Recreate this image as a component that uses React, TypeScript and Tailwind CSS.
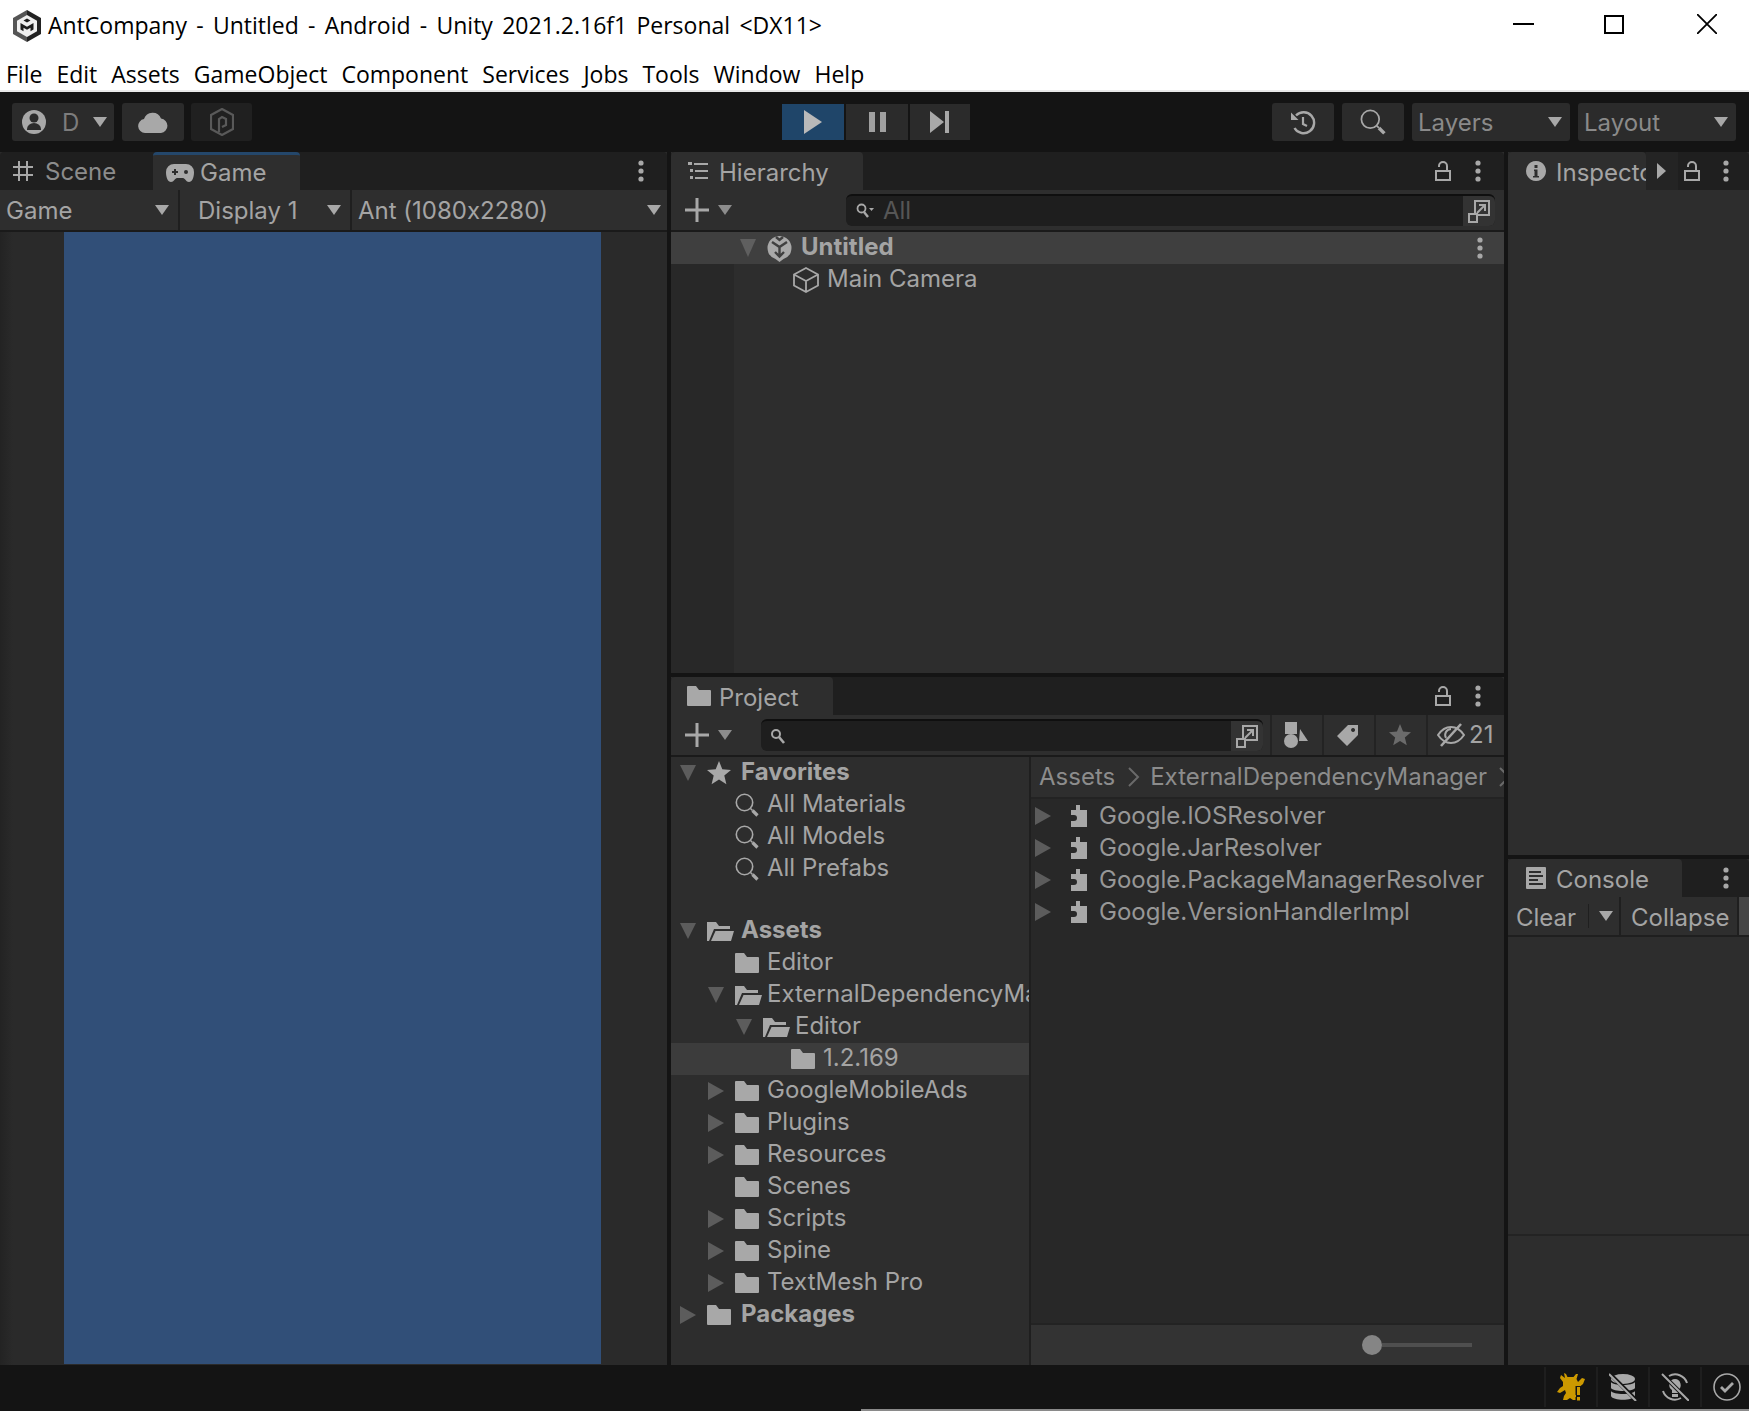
import type { ReactNode } from 'react';

const DIM = '#5c5c5c';
const ICON = '#a8a8a8';

function Down({ color = ICON, w = 14, h = 10 }: { color?: string; w?: number; h?: number }) {
  return (
    <svg width={w} height={h} viewBox="0 0 14 10" preserveAspectRatio="none" className="shrink-0">
      <path d="M0 0h14L7 10z" fill={color} />
    </svg>
  );
}

function Right({ color = DIM, w = 16, h = 18 }: { color?: string; w?: number; h?: number }) {
  return (
    <svg width={w} height={h} viewBox="0 0 16 18" preserveAspectRatio="none" className="shrink-0">
      <path d="M0 0l16 9-16 9z" fill={color} />
    </svg>
  );
}

function Dots() {
  return (
    <svg width="6" height="22" viewBox="0 0 6 22" className="shrink-0">
      <circle cx="3" cy="3" r="2.600" fill={ICON} />
      <circle cx="3" cy="11" r="2.600" fill={ICON} />
      <circle cx="3" cy="19" r="2.600" fill={ICON} />
    </svg>
  );
}

function Lock() {
  return (
    <svg width="16" height="20" viewBox="0 0 16 20" className="shrink-0" fill="none" stroke={ICON} strokeWidth="2">
      <rect x="1" y="10" width="14" height="9" />
      <path d="M12 10V5a4 4 0 0 0-8 0v1" />
    </svg>
  );
}

function Plus() {
  return (
    <svg width="24" height="24" viewBox="0 0 24 24" className="shrink-0">
      <path d="M10.500 0h3v10.500H24v3H13.500V24h-3V13.500H0v-3h10.500z" fill={ICON} />
    </svg>
  );
}

function Expand() {
  return (
    <svg width="24" height="24" viewBox="0 0 24 24" fill="none" stroke={ICON} strokeWidth="2" className="shrink-0">
      <path d="M8 15V2h14v14H9" />
      <rect x="2" y="15" width="8" height="8" />
      <path d="M10 14l8-8M12 6h6v6" />
    </svg>
  );
}

function Folder({ w = 24, h = 20 }: { w?: number; h?: number }) {
  return (
    <svg width={w} height={h} viewBox="0 0 24 20" className="shrink-0">
      <path d="M1 0h8l3 4h11a1 1 0 0 1 1 1v14a1 1 0 0 1-1 1H1a1 1 0 0 1-1-1V1a1 1 0 0 1 1-1z" fill={ICON} />
    </svg>
  );
}

function FolderOpen() {
  return (
    <svg width="27" height="20" viewBox="0 0 27 20" className="shrink-0">
      <path d="M0 20V1h9l3 4h11v3H7L2 20z" fill={ICON} />
      <path d="M4 20L8.500 10H27l-3 10z" fill={ICON} />
    </svg>
  );
}

function Star({ color = ICON, size = 24 }: { color?: string; size?: number }) {
  return (
    <svg width={size} height={size} viewBox="0 0 24 24" className="shrink-0">
      <path d="M12 0l3.300 8.200 8.700.7-6.700 5.700 2.100 8.600L12 18.500 4.600 23.200l2.100-8.600L0 8.900l8.700-.7z" fill={color} />
    </svg>
  );
}

function Magnifier({ size = 24 }: { size?: number }) {
  return (
    <svg width={size} height={size} viewBox="0 0 24 24" fill="none" stroke={ICON} className="shrink-0">
      <circle cx="9.500" cy="9.500" r="8.200" strokeWidth="1.600" />
      <path d="M15.500 15.500l2 2" strokeWidth="1.600" />
      <path d="M17.500 17.500l5 5" strokeWidth="3.200" />
    </svg>
  );
}

function Puzzle() {
  return (
    <svg width="18" height="22" viewBox="0 0 18 22" className="shrink-0">
      <path d="M7 0h4v5h7v17H2v-6h3a3 3 0 0 0 0-6H2V5h5z" fill={ICON} />
    </svg>
  );
}

function SceneIcon() {
  return (
    <svg width="25" height="28" viewBox="0 0 25 28" className="shrink-0">
      <path d="M12.500 2a12 12 0 0 1 12 12 12 12 0 0 1-8 11l-4 3-4-3a12 12 0 0 1-8-11 12 12 0 0 1 12-12z" fill={ICON} />
      <path d="M5 8l7.500 5L20 8M12.500 13v8M8 18l4.500 4.500L17 18M9 3l3.500 3L16 3" stroke="#3f3f3f" strokeWidth="2.400" fill="none" />
    </svg>
  );
}

function TitleLogo() {
  return (
    <svg width="28" height="32" viewBox="0 0 28 32" className="shrink-0">
      <path d="M14 0l14 8v16l-14 8z" fill="#222" />
      <path d="M14 0L0 8v16l14 8z" fill="#555" />
      <path d="M14 5l10 5.700v10.600L14 27 4 21.300V10.700z" fill="#f0f0f0" />
      <path d="M7.500 13l6.500 3.700 6.500-3.700v6.500l-3 1.700v-3.400L14 19.800l-3.500-2v3.400l-3-1.700z" fill="#1d1d1d" />
      <path d="M14 8.500l3.500 2L14 12.500l-3.500-2z" fill="#1d1d1d" />
    </svg>
  );
}

function Text({ children, className = '', tone = 'text-[#a4a4a4]' }: { children: ReactNode; className?: string; tone?: string }) {
  return (
    <span className={`font-['Inter',sans-serif] [font-feature-settings:'calt'_0] text-[24px] leading-none whitespace-nowrap ${tone} ${className}`}>
      {children}
    </span>
  );
}

function ToolButton({ className = '', children }: { className?: string; children: ReactNode }) {
  return <div className={`h-[38px] flex items-center rounded-[3px] ${className}`}>{children}</div>;
}

function Menu() {
  const items = ['File', 'Edit', 'Assets', 'GameObject', 'Component', 'Services', 'Jobs', 'Tools', 'Window', 'Help'];
  return (
    <div className="h-[40px] shrink-0 flex items-start gap-[14px] pl-[6px] pt-[4px] border-b-2 border-[#e8e8e8] font-['Open_Sans',sans-serif] text-[23px] leading-[36px] text-black">
      {items.map((item) => (
        <span key={item}>{item}</span>
      ))}
    </div>
  );
}

function Toolbar() {
  return (
    <div className="h-[60px] shrink-0 flex items-center bg-[#141414] pl-[12px] pr-[13px]">
      <ToolButton className="w-[102px] pl-[10px] bg-[#2b2b2b]">
        <svg width="24" height="28" viewBox="0 0 24 28" className="shrink-0">
          <circle cx="12" cy="14" r="12" fill={ICON} />
          <circle cx="12" cy="10" r="4.500" fill="#2b2b2b" />
          <path d="M5 21a7 6 0 0 1 14 0v1H5z" fill="#2b2b2b" />
        </svg>
        <Text tone="text-[#7d7d7d]" className="ml-[16px] mt-[2px]">D</Text>
        <span className="ml-[14px]">
          <Down />
        </span>
      </ToolButton>
      <ToolButton className="w-[62px] ml-[8px] justify-center bg-[#2b2b2b]">
        <svg width="30" height="22" viewBox="0 0 30 22" className="shrink-0">
          <path d="M7 22a7 7 0 0 1-1-13.900A9 9 0 0 1 23 7.500 7.300 7.300 0 0 1 23 22z" fill={ICON} />
        </svg>
      </ToolButton>
      <ToolButton className="w-[61px] ml-[7px] justify-center bg-[#202020]">
        <svg width="24" height="28" viewBox="0 0 24 28" fill="none" stroke="#595959" strokeWidth="2.200" className="shrink-0">
          <path d="M12 1l11 6v14l-11 6-11-6V7z" />
          <path d="M9 24V11l3-2 4 2v6l-4 2" />
        </svg>
      </ToolButton>
      <div className="ml-[530px] flex h-[36px] gap-[2px]">
        <div className="w-[62px] flex items-center justify-center bg-[#1f4569]">
          <svg width="18" height="24" viewBox="0 0 18 24">
            <path d="M0 0l18 12L0 24z" fill="#b9b9b9" />
          </svg>
        </div>
        <div className="w-[62px] flex items-center justify-center gap-[5px] bg-[#2b2b2b]">
          <div className="w-[6px] h-[20px] bg-[#a0a0a0]" />
          <div className="w-[6px] h-[20px] bg-[#a0a0a0]" />
        </div>
        <div className="w-[60px] flex items-center justify-center bg-[#2b2b2b]">
          <svg width="20" height="22" viewBox="0 0 20 22">
            <path d="M0 0l14 11L0 22zM15 0h4v22h-4z" fill="#a8a8a8" />
          </svg>
        </div>
      </div>
      <ToolButton className="w-[62px] ml-auto justify-center bg-[#2b2b2b]">
        <svg width="26" height="26" viewBox="0 0 26 26" fill="none" stroke={ICON} className="shrink-0">
          <path d="M6 6.500a10.500 10.500 0 1 1-1.500 12.500" strokeWidth="2.400" />
          <path d="M1 3.500V11h7.500z" fill={ICON} stroke="none" />
          <path d="M13 8v7l4 2" strokeWidth="2.200" />
        </svg>
      </ToolButton>
      <ToolButton className="w-[62px] ml-[8px] justify-center bg-[#2b2b2b]">
        <Magnifier size={26} />
      </ToolButton>
      <ToolButton className="w-[158px] ml-[8px] pl-[6px] pr-[8px] justify-between bg-[#2b2b2b]">
        <Text tone="text-[#8a8a8a]" className="mt-[2px]">Layers</Text>
        <Down />
      </ToolButton>
      <ToolButton className="w-[158px] ml-[8px] pl-[6px] pr-[8px] justify-between bg-[#2b2b2b]">
        <Text tone="text-[#8a8a8a]" className="mt-[2px]">Layout</Text>
        <Down />
      </ToolButton>
    </div>
  );
}

function GamePanel() {
  return (
    <div className="w-[667px] shrink-0 flex flex-col bg-[#2a2a2a]">
      <div className="h-[38px] shrink-0 flex rounded-t-[4px] bg-[#1f1f1f]">
        <div className="w-[153px] flex items-center pl-[13px]">
          <svg width="20" height="20" viewBox="0 0 20 20" stroke={ICON} strokeWidth="2" className="shrink-0">
            <path d="M6 0v20M14 0v20M0 6h20M0 14h20" />
          </svg>
          <Text tone="text-[#8c8c8c]" className="ml-[12px] mt-[2px]">Scene</Text>
        </div>
        <div className="w-[147px] flex items-center pl-[13px] bg-[#2e2e2e] border-t-[3px] border-[#24476b] rounded-t-[4px]">
          <svg width="28" height="18" viewBox="0 0 28 18" className="shrink-0">
            <path d="M8 0h12a8 8 0 0 1 8 8c0 6-2 10-5 10-3 0-4-4-6-4h-6c-2 0-3 4-6 4-3 0-5-4-5-10a8 8 0 0 1 8-8z" fill={ICON} />
            <path d="M6 8h6M9 5v6" stroke="#2e2e2e" strokeWidth="2" />
            <circle cx="20" cy="8" r="2" fill="#2e2e2e" />
          </svg>
          <Text className="ml-[6px]">Game</Text>
        </div>
        <div className="ml-auto mr-[23px] self-center">
          <Dots />
        </div>
      </div>
      <div className="h-[42px] shrink-0 flex border-b-2 border-[#1a1a1a]">
        <div className="w-[180px] flex items-center justify-between pl-[6px] pr-[9px] border-r-2 border-[#1f1f1f] bg-[#2e2e2e]">
          <Text className="mt-[2px]">Game</Text>
          <Down />
        </div>
        <div className="w-[172px] flex items-center justify-between pl-[18px] pr-[9px] border-r-2 border-[#1f1f1f] bg-[#2e2e2e]">
          <Text className="mt-[2px]">Display 1</Text>
          <Down />
        </div>
        <div className="flex-1 flex items-center justify-between pl-[6px] pr-[6px] bg-[#2e2e2e]">
          <Text className="mt-[2px]">Ant (1080x2280)</Text>
          <Down />
        </div>
      </div>
      <div className="flex-1 flex">
        <div className="w-[64px] bg-gradient-to-r from-[#232323] to-[#2a2a2a] to-[20%]" />
        <div className="w-[537px] bg-[#314f78] mb-px" />
      </div>
    </div>
  );
}

function HierarchyPanel() {
  return (
    <div className="h-[521px] shrink-0 flex flex-col bg-[#2d2d2d]">
      <div className="h-[38px] shrink-0 flex items-center rounded-t-[4px] bg-[#1f1f1f]">
        <div className="w-[192px] h-full flex items-center pl-[17px] bg-[#2e2e2e] rounded-t-[4px]">
          <svg width="20" height="18" viewBox="0 0 20 18" className="shrink-0">
            <path d="M0 0h4v3H0zM6 1h14v2H6zM2 7h3v3H2zM7 8h13v2H7zM2 14h3v3H2zM7 15h13v2H7z" fill={ICON} />
          </svg>
          <Text className="ml-[11px] mt-[4px]">Hierarchy</Text>
        </div>
        <div className="ml-auto flex items-center gap-[24px] pr-[23px]">
          <Lock />
          <Dots />
        </div>
      </div>
      <div className="h-[42px] shrink-0 flex items-center pl-[14px] border-b-2 border-[#1a1a1a] bg-[#2e2e2e]">
        <Plus />
        <span className="ml-[9px]">
          <Down color="#8c8c8c" />
        </span>
        <div className="ml-[114px] w-[649px] h-[32px] flex items-center rounded-[6px] border-t-2 border-[#0f0f0f] bg-[#1e1e1e] pl-[10px]">
          <svg width="18" height="16" viewBox="0 0 18 16" fill="none" stroke={ICON} strokeWidth="1.800" className="shrink-0">
            <circle cx="5.500" cy="5.500" r="4" />
            <path d="M8 9l4 5" strokeWidth="2.400" />
            <path d="M13 5h5l-2.500 3z" fill={ICON} stroke="none" />
          </svg>
          <Text tone="text-[#565656]" className="ml-[9px]">All</Text>
          <div className="ml-auto w-[32px] h-full flex items-center justify-center bg-[#333] rounded-r-[6px]">
            <Expand />
          </div>
        </div>
      </div>
      <div className="h-[32px] shrink-0 flex items-center pl-[69px] bg-[#3f3f3f]">
        <Down color="#5f5f5f" w={16} h={18} />
        <span className="ml-[11px]">
          <SceneIcon />
        </span>
        <Text className="ml-[9px] mb-[2px] font-bold">Untitled</Text>
        <div className="ml-auto mr-[21px]">
          <Dots />
        </div>
      </div>
      <div className="flex-1 flex">
        <div className="w-[63px] bg-[#282828]" />
        <div className="flex-1 h-[32px] flex items-center pl-[58px]">
          <svg width="28" height="28" viewBox="0 0 28 28" fill="none" stroke={ICON} strokeWidth="1.800" className="shrink-0">
            <path d="M14 2l12 6.500v11L14 26 2 19.500v-11zM2 8.500L14 15l12-6.500M14 15v11" />
          </svg>
          <Text className="ml-[7px] mb-[2px]">Main Camera</Text>
        </div>
      </div>
    </div>
  );
}

type Node = { label: string; level: number; arrow?: 'down' | 'right'; kind?: 'folder' | 'open' | 'star' | 'search'; bold?: boolean; selected?: boolean };

const treeTop: Node[] = [
  { label: 'Favorites', level: 0, arrow: 'down', kind: 'star', bold: true },
  { label: 'All Materials', level: 1, kind: 'search' },
  { label: 'All Models', level: 1, kind: 'search' },
  { label: 'All Prefabs', level: 1, kind: 'search' },
];

const treeAssets: Node[] = [
  { label: 'Assets', level: 0, arrow: 'down', kind: 'open', bold: true },
  { label: 'Editor', level: 1 },
  { label: 'ExternalDependencyManager', level: 1, arrow: 'down', kind: 'open' },
  { label: 'Editor', level: 2, arrow: 'down', kind: 'open' },
  { label: '1.2.169', level: 3, selected: true },
  { label: 'GoogleMobileAds', level: 1, arrow: 'right' },
  { label: 'Plugins', level: 1, arrow: 'right' },
  { label: 'Resources', level: 1, arrow: 'right' },
  { label: 'Scenes', level: 1 },
  { label: 'Scripts', level: 1, arrow: 'right' },
  { label: 'Spine', level: 1, arrow: 'right' },
  { label: 'TextMesh Pro', level: 1, arrow: 'right' },
  { label: 'Packages', level: 0, arrow: 'right', bold: true },
];

function TreeRow({ node }: { node: Node }) {
  const { label, level, arrow, kind = 'folder', bold, selected } = node;
  return (
    <div
      className={`h-[32px] flex items-center overflow-hidden ${selected ? 'bg-[#3c3c3c]' : ''}`}
      style={{ paddingLeft: 4 + level * 28 }}
    >
      <div className="w-[32px] shrink-0 flex items-center justify-center pr-[6px]">
        {arrow === 'down' && <Down color={DIM} w={16} h={16} />}
        {arrow === 'right' && <Right />}
      </div>
      <div className="w-[32px] shrink-0 flex items-center">
        {kind === 'folder' && <Folder />}
        {kind === 'open' && <FolderOpen />}
        {kind === 'star' && <Star />}
        {kind === 'search' && <Magnifier />}
      </div>
      <Text className={bold ? 'font-bold ml-[2px] mb-[2px]' : 'mb-[2px]'}>{label}</Text>
    </div>
  );
}

const packages = ['Google.IOSResolver', 'Google.JarResolver', 'Google.PackageManagerResolver', 'Google.VersionHandlerImpl'];

function ProjectPanel() {
  return (
    <div className="flex-1 min-h-0 flex flex-col bg-[#2d2d2d]">
      <div className="h-[38px] shrink-0 flex items-center rounded-t-[4px] bg-[#1f1f1f]">
        <div className="w-[162px] h-full flex items-center pl-[16px] bg-[#2e2e2e] rounded-t-[4px]">
          <Folder />
          <Text className="ml-[8px] mt-[4px]">Project</Text>
        </div>
        <div className="ml-auto flex items-center gap-[24px] pr-[23px]">
          <Lock />
          <Dots />
        </div>
      </div>
      <div className="h-[42px] shrink-0 flex items-stretch pl-[14px] border-b-2 border-[#1a1a1a] bg-[#2e2e2e]">
        <div className="flex items-center">
          <Plus />
          <span className="ml-[9px]">
            <Down color="#8c8c8c" />
          </span>
        </div>
        <div className="ml-[29px] my-[4px] w-[502px] flex items-center rounded-[6px] border-t-2 border-[#0f0f0f] bg-[#1e1e1e] pl-[9px]">
          <svg width="15" height="16" viewBox="0 0 15 16" fill="none" stroke={ICON} strokeWidth="2" className="shrink-0">
            <circle cx="6" cy="6" r="4" />
            <path d="M9 9l5 6" strokeWidth="2.600" />
          </svg>
          <div className="ml-auto w-[32px] h-full flex items-center justify-center bg-[#333] rounded-r-[6px]">
            <Expand />
          </div>
        </div>
        <div className="ml-[7px] flex-1 flex gap-[2px]">
          <div className="w-[50px] flex items-center justify-center border-l-2 border-[#232323] bg-[#2e2e2e]">
            <svg width="24" height="26" viewBox="0 0 24 26" className="shrink-0">
              <rect x="1" y="0" width="12" height="12" fill={ICON} />
              <circle cx="7" cy="19" r="7" fill={ICON} />
              <path d="M16 7l8 12h-9z" fill={ICON} />
            </svg>
          </div>
          <div className="w-[50px] flex items-center justify-center border-l-2 border-[#232323]">
            <svg width="22" height="22" viewBox="0 0 22 22" className="shrink-0">
              <path d="M11 1h10v10L10 22 0 12zM16 4a2 2 0 1 0 .1 0z" fill={ICON} fillRule="evenodd" />
            </svg>
          </div>
          <div className="w-[50px] flex items-center justify-center border-l-2 border-[#232323]">
            <Star color="#6b6b6b" size={22} />
          </div>
          <div className="flex-1 flex items-center pl-[9px] border-l-2 border-[#232323]">
            <svg width="28" height="24" viewBox="0 0 28 24" fill="none" stroke={ICON} strokeWidth="2" className="shrink-0">
              <path d="M1 12c4-6 8-8 13-8s9 2 13 8c-4 6-8 8-13 8S5 18 1 12z" />
              <path d="M14 6a6 6 0 0 0-5 9" />
              <path d="M24 1L4 23" strokeWidth="2.600" />
            </svg>
            <Text className="ml-[4px]">21</Text>
          </div>
        </div>
      </div>
      <div className="flex-1 min-h-0 flex">
        <div className="w-[358px] shrink-0 flex flex-col">
          {treeTop.map((node) => (
            <TreeRow key={node.label} node={node} />
          ))}
          <div className="h-[30px] shrink-0" />
          {treeAssets.map((node, index) => (
            <TreeRow key={index} node={node} />
          ))}
        </div>
        <div className="flex-1 min-w-0 flex flex-col border-l-2 border-[#1f1f1f]">
          <div className="h-[42px] shrink-0 flex items-center pl-[8px] border-b-2 border-[#232323] bg-[#2e2e2e] overflow-hidden">
            <Text tone="text-[#8c8c8c]">Assets</Text>
            <svg width="12" height="20" viewBox="0 0 12 20" fill="none" stroke="#6a6a6a" strokeWidth="2" className="ml-[13px] shrink-0">
              <path d="M1 1l9 9-9 9" />
            </svg>
            <Text tone="text-[#8c8c8c]" className="ml-[10px]">ExternalDependencyManager</Text>
            <svg width="12" height="20" viewBox="0 0 12 20" fill="none" stroke="#6a6a6a" strokeWidth="2" className="ml-[12px] shrink-0">
              <path d="M1 1l9 9-9 9" />
            </svg>
          </div>
          <div className="flex-1 pt-[1px] bg-[#282828]">
            {packages.map((name) => (
              <div key={name} className="h-[32px] flex items-center pl-[4px]">
                <Right />
                <span className="ml-[18px]">
                  <Puzzle />
                </span>
                <Text tone="text-[#979797]" className="ml-[12px]">{name}</Text>
              </div>
            ))}
          </div>
          <div className="h-[42px] shrink-0 flex items-center pl-[331px] border-t-2 border-[#232323] bg-[#333]">
            <div className="w-[20px] h-[20px] rounded-full bg-[#858585]" />
            <div className="w-[90px] h-[4px] bg-[#4f4f4f]" />
          </div>
        </div>
      </div>
    </div>
  );
}

function RightPanels() {
  return (
    <div className="flex-1 flex flex-col gap-[4px]">
      <div className="h-[703px] shrink-0 flex flex-col bg-[#2d2d2d]">
        <div className="h-[38px] shrink-0 flex items-center rounded-t-[4px] bg-[#1f1f1f]">
          <div className="w-[138px] h-full flex items-center pl-[18px] bg-[#2e2e2e] rounded-t-[4px] overflow-hidden">
            <svg width="20" height="20" viewBox="0 0 20 20" className="shrink-0">
              <path fillRule="evenodd" fill={ICON} d="M10 0a10 10 0 1 0 .01 0zM8.500 4h3v3h-3zM8 8.500h3.500V15H13v1.500H7V15h1.500v-5H8z" />
            </svg>
            <Text className="ml-[10px] mt-[4px]">Inspector</Text>
          </div>
          <div className="w-[32px] h-full flex items-center pl-[11px] bg-[#242424]">
            <Right color={ICON} w={9} h={16} />
          </div>
          <div className="flex items-center gap-[23px] pl-[6px]">
            <Lock />
            <Dots />
          </div>
        </div>
      </div>
      <div className="flex-1 flex flex-col bg-[#2d2d2d]">
        <div className="h-[38px] shrink-0 flex items-center rounded-t-[4px] bg-[#1f1f1f]">
          <div className="w-[174px] h-full flex items-center pl-[18px] bg-[#2e2e2e] rounded-t-[4px]">
            <svg width="20" height="22" viewBox="0 0 20 22" className="shrink-0">
              <path fillRule="evenodd" fill={ICON} d="M1 0h18a1 1 0 0 1 1 1v20a1 1 0 0 1-1 1H1a1 1 0 0 1-1-1V1a1 1 0 0 1 1-1zM3 4v2h12V4zM3 8v2h14V8zM3 12v2h9v-2zM3 16v2h14v-2z" />
            </svg>
            <Text className="ml-[10px] mt-[4px]">Console</Text>
          </div>
          <div className="ml-auto mr-[20px]">
            <Dots />
          </div>
        </div>
        <div className="h-[40px] shrink-0 flex border-b-2 border-[#1f1f1f]">
          <div className="w-[113px] flex items-center pl-[8px] border-r-2 border-[#1f1f1f] bg-[#2e2e2e]">
            <Text className="mt-[4px]">Clear</Text>
            <div className="ml-[12px] w-px h-[24px] bg-[#1f1f1f]" />
            <span className="ml-[10px]">
              <Down />
            </span>
          </div>
          <div className="w-[118px] flex items-center pl-[10px] border-r-2 border-[#1f1f1f] bg-[#2e2e2e]">
            <Text className="mt-[4px]">Collapse</Text>
          </div>
          <div className="flex-1 bg-[#464646]" />
        </div>
        <div className="h-[299px] shrink-0 border-b-2 border-[#232323] bg-[#2d2d2d]" />
      </div>
    </div>
  );
}

function StatusBar() {
  return (
    <div className="h-[46px] shrink-0 flex flex-col bg-[#141414]">
      <div className="flex-1 flex justify-end items-center mr-[-3px]">
        {[
          <svg key="bug" width="28" height="28" viewBox="0 0 28 28">
            <path d="M7 0l2 1 1.500 3h6L19 1l2 0-1.500 5 1.500 3 4-4 3 1-2 5-5 4v4h-2v8h-3l-3-2-3 2H6l1-4 2-3-1-3-5 3-3-1 3-4 3-2V9L3 5l1-3 4 3z" fill="#cc9900" />
            <path d="M18.500 13h5v9h-5zM18.500 24h5v4h-5z" fill="#141414" />
            <path d="M20 14h3v8h-3zM20 24h3v3.500h-3z" fill="#cc9900" />
          </svg>,
          <svg key="db" width="28" height="28" viewBox="0 0 28 28">
            <ellipse cx="14" cy="6" rx="12" ry="5" fill={ICON} />
            <path d="M2 9c2 4 22 4 24 0v6c-2 4-22 4-24 0zM2 18c2 4 22 4 24 0v5c-2 5-22 5-24 0z" fill={ICON} />
            <path d="M1 1l26 26" stroke="#141414" strokeWidth="4" />
            <path d="M0 1l27 27" stroke={ICON} strokeWidth="2" />
          </svg>,
          <svg key="bulb" width="28" height="28" viewBox="0 0 28 28" fill="none">
            <path d="M8 3a12.500 12.500 0 0 1 18 7M20 25a12.500 12.500 0 0 1-18-7" stroke={ICON} strokeWidth="2" />
            <path d="M14 6a6 6 0 0 1 3 11v3h-6v-3a6 6 0 0 1 3-11z" fill={ICON} />
            <path d="M11 21h6v3h-6z" fill={ICON} />
            <path d="M1 1l26 26" stroke="#141414" strokeWidth="4" />
            <path d="M1 1l27 27" stroke={ICON} strokeWidth="2" />
          </svg>,
          <svg key="check" width="28" height="28" viewBox="0 0 28 28" fill="none" stroke={ICON}>
            <circle cx="14" cy="14" r="13" strokeWidth="1.600" />
            <path d="M8 14l4 4 8-8" strokeWidth="2.800" />
          </svg>,
        ].map((icon, index) => (
          <div key={index} className="w-[52px] h-[40px] flex items-center justify-center border-l-2 border-[#1e1e1e]">
            {icon}
          </div>
        ))}
      </div>
      <div className="h-[2px] ml-[861px] bg-[#8a8a8a]" />
    </div>
  );
}

export default function App() {
  return (
    <div className="w-[1749px] h-[1411px] flex flex-col overflow-hidden bg-white">
      <div className="h-[52px] shrink-0 flex items-center pl-[13px] pr-[32px] font-['Open_Sans',sans-serif] text-[23px] [word-spacing:3.300px] text-black">
        <TitleLogo />
        <span className="ml-[7px] mb-[2px] whitespace-pre">AntCompany - Untitled - Android - Unity 2021.2.16f1 Personal {'<DX11>'}</span>
        <div className="ml-auto mb-[4px] flex items-center">
          <div className="w-[21px] h-[2px] bg-black" />
          <div className="ml-[70px] w-[20px] h-[19px] border-2 border-black" />
          <svg width="20" height="20" viewBox="0 0 20 20" stroke="black" strokeWidth="1.800" className="ml-[73px]">
            <path d="M0 0l20 20M20 0L0 20" />
          </svg>
        </div>
      </div>
      <Menu />
      <Toolbar />
      <div className="flex-1 min-h-0 flex gap-[4px] bg-[#141414]">
        <GamePanel />
        <div className="w-[833px] shrink-0 flex flex-col gap-[4px]">
          <HierarchyPanel />
          <ProjectPanel />
        </div>
        <RightPanels />
      </div>
      <StatusBar />
    </div>
  );
}
